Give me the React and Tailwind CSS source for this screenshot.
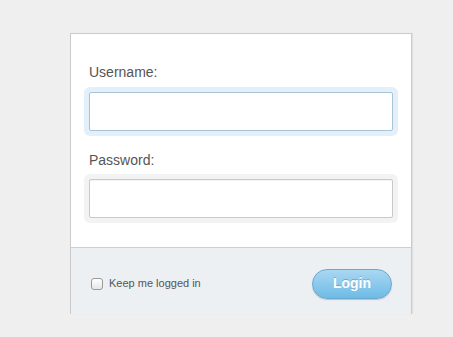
export default function App() {
  return (
    <div className="min-h-[337px] w-full bg-[#efefef] pt-[33px] pl-[70px] font-['Liberation_Sans',Arial,sans-serif]">
      <div className="w-[342px] border border-b-0 border-[#cbcbcb] bg-white shadow-[1px_0_1px_rgba(0,0,0,0.06)]">
        <form onSubmit={(e) => e.preventDefault()} className="px-[18px] pt-[30px] pb-[24px]">
          <label htmlFor="username" className="block text-[14px] leading-[17px] text-[#555]">Username:</label>
          <div className="mt-[6px] -mx-[5px] rounded-[6px] bg-[#e3f0fa] p-[5px]">
            <input id="username" type="text" className="block h-[39px] w-full rounded-[2px] border border-[#a9c3d6] bg-white px-2 text-[14px] outline-none" />
          </div>
          <label htmlFor="password" className="mt-[16px] block text-[14px] leading-[17px] text-[#555]">Password:</label>
          <div className="mt-[5px] -mx-[5px] rounded-[6px] bg-[#f3f3f3] p-[5px]">
            <input id="password" type="password" className="block h-[39px] w-full rounded-[2px] border border-[#c9c9c9] bg-white px-2 text-[14px] outline-none shadow-[inset_0_1px_1px_rgba(0,0,0,0.05)]" />
          </div>
        </form>
        <div className="flex h-[67px] items-center justify-between border-t border-[#cfcfcf] bg-[#edf0f3] pl-[20px] pr-[19px] pt-[5px]">
          <label className="flex items-center gap-[6px] text-[11px] text-[#555]">
            <span className="block h-[12px] w-[12px] rounded-[3px] border border-[#9a9a9a] bg-gradient-to-b from-white to-[#e6e6e6]"></span>
            Keep me logged in
          </label>
          <button className="h-[30px] w-[80px] rounded-full border border-[#6aa8d2] bg-gradient-to-b from-[#a9d7f2] to-[#6dbbe6] text-[14px] font-bold text-white shadow-[0_1px_1px_rgba(0,0,0,0.2)] [text-shadow:0_-1px_0_rgba(0,0,0,0.2)]">
            Login
          </button>
        </div>
      </div>
    </div>
  );
}
